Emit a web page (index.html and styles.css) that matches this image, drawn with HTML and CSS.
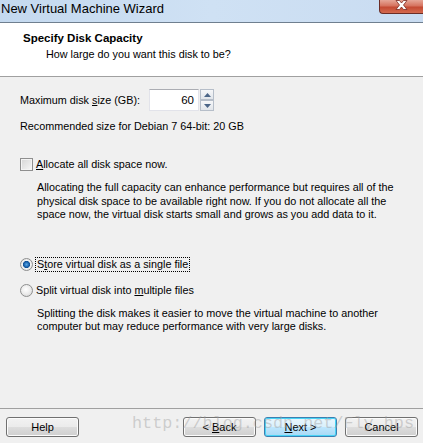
FILE: index.html
```html
<!DOCTYPE html>
<html>
<head>
<meta charset="utf-8">
<link rel="stylesheet" href="styles.css">
</head>
<body>
<div class="window">
  <div class="titlebar">
    <span class="title">New Virtual Machine Wizard</span>
    <div class="close">
      <svg width="44" height="14" viewBox="0 0 44 14">
        <path d="M16 0.5 L19.5 0.5 L21.5 3 L23.5 0.5 L27 0.5 L23.5 5 L27 9.5 L23.5 9.5 L21.5 7 L19.5 9.5 L16 9.5 L19.5 5 Z" fill="#ffffff" stroke="#7a2a22" stroke-width="0.8" stroke-linejoin="round"/>
      </svg>
    </div>
  </div>
  <div class="header">
    <div class="h-title">Specify Disk Capacity</div>
    <div class="h-sub">How large do you want this disk to be?</div>
  </div>
  <div class="content">
    <div class="size-row">
      <span class="size-label">Maximum disk <u>s</u>ize (GB):</span>
      <div class="spin-input">60</div>
      <div class="spin-btns">
        <div class="spin-btn">
          <svg width="7" height="4" viewBox="0 0 7 4"><path d="M0 4 L3.5 0 L7 4 Z" fill="#4b6587"/></svg>
        </div>
        <div class="spin-btn">
          <svg width="7" height="4" viewBox="0 0 7 4"><path d="M0 0 L7 0 L3.5 4 Z" fill="#4b6587"/></svg>
        </div>
      </div>
    </div>
    <div class="rec">Recommended size for Debian 7 64-bit: 20 GB</div>
    <div class="check-row">
      <span class="checkbox"></span>
      <span class="opt-text"><u>A</u>llocate all disk space now.</span>
    </div>
    <p class="desc desc-alloc">Allocating the full capacity can enhance performance but requires all of the<br>physical disk space to be available right now. If you do not allocate all the<br>space now, the virtual disk starts small and grows as you add data to it.</p>
    <div class="radio-row radio-first">
      <span class="radio checked"></span>
      <span class="opt-text focus">S<u>t</u>ore virtual disk as a single file</span>
    </div>
    <div class="radio-row radio-second">
      <span class="radio"></span>
      <span class="opt-text">Split virtual disk into <u>m</u>ultiple files</span>
    </div>
    <p class="desc desc-split">Splitting the disk makes it easier to move the virtual machine to another<br>computer but may reduce performance with very large disks.</p>
  </div>
  <div class="footer">
    <button class="btn">Help</button>
    <div class="footer-right">
      <button class="btn">&lt; <u>B</u>ack</button>
      <button class="btn btn-default"><u>N</u>ext &gt;</button>
      <button class="btn">Cancel</button>
    </div>
    <div class="watermark">http://blog.csdn.net/Fly_hps</div>
  </div>
</div>
</body>
</html>
```

FILE: styles.css
```css
* { box-sizing: border-box; }
html, body {
  margin: 0;
  padding: 0;
  background: #f0f0f0;
}
body {
  font-family: "Liberation Sans", Arial, sans-serif;
  font-size: 10.8px;
  color: #000;
}
.window {
  width: 423px;
  height: 443px;
  display: flex;
  flex-direction: column;
  overflow: hidden;
}
.titlebar {
  height: 23px;
  flex-shrink: 0;
  display: flex;
  justify-content: space-between;
  align-items: flex-start;
  background: linear-gradient(to right, #c4d9ef 0%, #cfe1f4 50%, #c9dcf1 100%);
  border-bottom: 1px solid #6f7f8f;
}
.title {
  font-size: 13px;
  line-height: 18px;
  padding-left: 1px;
  color: #000;
}
.close {
  width: 44px;
  height: 14px;
  border: 1px solid #6b2d26;
  border-top: none;
  border-right: none;
  border-radius: 0 0 0 4px;
  background: linear-gradient(to bottom, #e6a697 0%, #d6735f 45%, #c44a33 55%, #d46a4f 100%);
  overflow: hidden;
}
.close svg { display: block; }
.header {
  height: 54px;
  flex-shrink: 0;
  background: #ffffff;
  border-bottom: 1px solid #a0a0a0;
  padding: 8px 0 0 23px;
}
.h-title {
  font-weight: bold;
  font-size: 11.5px;
  line-height: 14px;
}
.h-sub {
  margin-top: 2px;
  padding-left: 23px;
  line-height: 14px;
}
.content {
  padding-left: 20px;
}
.size-row {
  margin-top: 12px;
  height: 22px;
  display: flex;
  align-items: center;
}
.size-label {
  width: 129px;
  flex-shrink: 0;
}
.spin-input {
  width: 50px;
  height: 22px;
  background: #fff;
  border: 1px solid #e2e3ea;
  border-top-color: #abadb3;
  text-align: right;
  padding-right: 4px;
  line-height: 20px;
  font-size: 11.5px;
}
.spin-btns {
  width: 14px;
  height: 22px;
  margin-left: 1px;
  display: flex;
  flex-direction: column;
}
.spin-btn {
  height: 11px;
  border: 1px solid #b6bec9;
  background: linear-gradient(to bottom, #f6f7f9, #e1e5ea);
  display: flex;
  align-items: center;
  justify-content: center;
}
.rec {
  margin-top: 8px;
  line-height: 14px;
}
.check-row {
  margin-top: 24px;
  height: 14px;
  display: flex;
  align-items: center;
}
.checkbox {
  width: 13px;
  height: 13px;
  border: 1px solid #8f8f8f;
  background: linear-gradient(135deg, #d6d6d6 0%, #e8e8e8 55%, #f8f8f8 100%);
  box-shadow: inset 0 0 0 1px #f4f4f4;
  flex-shrink: 0;
}
.opt-text {
  margin-left: 3px;
  line-height: 14px;
}
.desc {
  margin: 9px 0 0 17px;
  line-height: 13.5px;
  white-space: nowrap;
}
.desc-alloc { margin-top: 10px; }
.radio-row {
  display: flex;
  align-items: center;
  height: 15px;
}
.radio-first { margin-top: 35px; }
.radio-second { margin-top: 11px; }
.radio {
  width: 13px;
  height: 13px;
  border-radius: 50%;
  border: 1px solid #8e8f8f;
  background: radial-gradient(circle at 45% 40%, #ffffff 0%, #ececec 50%, #cfcfcf 100%);
  flex-shrink: 0;
}
.radio.checked {
  background: radial-gradient(circle, #5aa9e6 0%, #1f67b1 30%, #0f4f94 42%, #f2f2f2 50%, #dadada 100%);
}
.focus {
  margin-left: 2px;
  padding: 0 1px;
  border: 1px dotted #000;
  line-height: 13px;
}
.desc-split { margin-top: 9px; }
.footer {
  margin-top: auto;
  flex-shrink: 0;
  border-top: 1px solid #a0a0a0;
  height: 35px;
  padding: 8px 5px 0 6px;
  display: flex;
  justify-content: space-between;
  align-items: flex-start;
  position: relative;
}
.footer-right {
  display: flex;
  gap: 8px;
}
.btn {
  width: 73px;
  height: 20px;
  margin: 0;
  padding: 0;
  font-family: "Liberation Sans", Arial, sans-serif;
  font-size: 11px;
  color: #000;
  border: 1px solid #707070;
  border-radius: 3px;
  background: linear-gradient(to bottom, #f2f2f2 0%, #ebebeb 50%, #dddddd 51%, #cfcfcf 100%);
  box-shadow: inset 0 0 0 1px #fcfcfc;
}
.btn-default {
  border-color: #3c7fb1;
  background: linear-gradient(to bottom, #eaf6fd 0%, #d9f0fc 50%, #bee6fd 51%, #a7d9f5 100%);
  box-shadow: inset 0 0 0 1px #48d4f6;
}
.watermark {
  position: absolute;
  left: 132px;
  top: 5px;
  font-family: "Liberation Mono", "Courier New", monospace;
  font-size: 16.8px;
  line-height: 20px;
  color: rgba(160, 160, 160, 0.45);
  pointer-events: none;
  white-space: nowrap;
}
```
